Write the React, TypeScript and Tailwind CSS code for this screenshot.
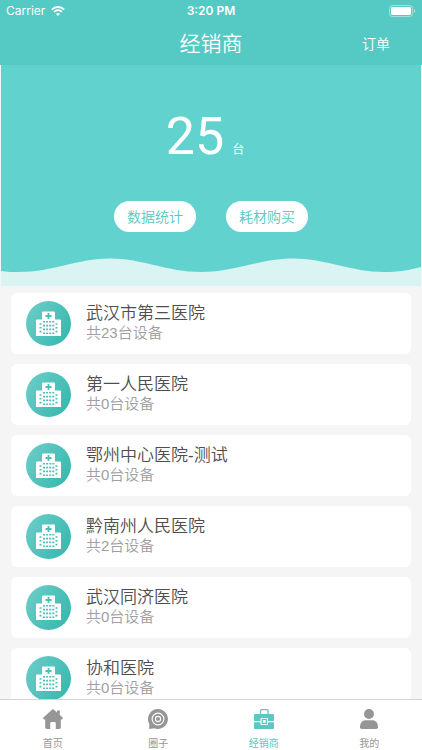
import type { ReactNode } from "react";

type Hospital = {
  id: number;
  name: string;
  devices: number;
};

const hospitals: Hospital[] = [
  { id: 1, name: "武汉市第三医院", devices: 23 },
  { id: 2, name: "第一人民医院", devices: 0 },
  { id: 3, name: "鄂州中心医院-测试", devices: 0 },
  { id: 4, name: "黔南州人民医院", devices: 2 },
  { id: 5, name: "武汉同济医院", devices: 0 },
  { id: 6, name: "协和医院", devices: 0 },
];

const WifiIcon = () => (
  <svg viewBox="0 0 14 10" className="w-[14px] h-[10px]" fill="none" stroke="white">
    <path d="M0.8 3.6C4.3 0.2 9.7 0.2 13.2 3.6" strokeWidth="1.9" />
    <path d="M3 5.9C5.3 3.7 8.7 3.7 11 5.9" strokeWidth="1.8" />
    <path d="M7 10L4.9 7.8C6.1 6.8 7.9 6.8 9.1 7.8Z" fill="white" stroke="none" />
  </svg>
);

const BatteryIcon = () => (
  <svg viewBox="0 0 27 12" className="w-[27px] h-[12px]">
    <rect x="0.5" y="0.5" width="23" height="11" rx="2.8" fill="none" stroke="white" strokeOpacity="0.45" />
    <rect x="2" y="2" width="20" height="8" rx="1.4" fill="white" />
    <path d="M25 4C26.6 4.6 26.6 7.4 25 8Z" fill="white" fillOpacity="0.5" />
  </svg>
);

const HospitalIcon = () => (
  <svg viewBox="0 0 45 45" className="w-[45px] h-[45px] shrink-0">
    <defs>
      <linearGradient id="disc" x1="0" y1="0.2" x2="1" y2="0.8">
        <stop offset="0" stopColor="#6accc7" />
        <stop offset="1" stopColor="#36b8ae" />
      </linearGradient>
    </defs>
    <circle cx="22.5" cy="22.5" r="22.5" fill="url(#disc)" />
    <path
      d="M17 10.5H28Q29 10.5 29 11.5V18.5H34Q35 18.5 35 19.5V35H10V19.5Q10 18.5 11 18.5H16V11.5Q16 10.5 17 10.5Z"
      fill="white"
    />
    <path d="M22.5 12V18M19.5 15H25.5" stroke="#4bc0b8" strokeWidth="1.8" />
    <g stroke="#4bc0b8" strokeWidth="1.6">
      <path d="M17 20.8H28.4M17 24.6H28.4M17 28.4H28.4M17 32.2H28.4" strokeDasharray="2 1.1" />
      <path d="M13.5 23H15.5M13.5 26.8H15.5M13.5 30.6H15.5M29.5 23H31.5M29.5 26.8H31.5M29.5 30.6H31.5" />
    </g>
  </svg>
);

const HomeIcon = () => (
  <svg viewBox="0 0 20 20" className="w-5 h-5" fill="currentColor">
    <path d="M9.3 0.5Q10 -0.1 10.7 0.5L14 3.4V1.5H16.8V5.9L19.6 8.5Q20.4 9.8 19 10.4H17.8V18.6Q17.8 20 16.4 20H12.8V14.4Q12.8 13 11.4 13H8.6Q7.2 13 7.2 14.4V20H3.6Q2.2 20 2.2 18.6V10.4H1Q-0.4 9.8 0.4 8.5Z" />
  </svg>
);

const CircleIcon = () => (
  <svg viewBox="0 0 20 20" className="w-5 h-5">
    <path
      d="M10 0A10 10 0 1 1 6 19.2Q3.5 20 0.8 19.8Q1.6 18.2 1.2 14.8A10 10 0 0 1 10 0Z"
      fill="currentColor"
    />
    <g fill="none" stroke="white" strokeWidth="1.1">
      <circle cx="10" cy="10" r="5.9" />
      <circle cx="10" cy="10" r="2.6" />
    </g>
  </svg>
);

const BriefcaseIcon = () => (
  <svg viewBox="0 0 20 20" className="w-5 h-5" fill="currentColor">
    <path d="M6.5 5V1.6Q6.5 0.7 7.4 0.7H13.1Q14 0.7 14 1.6V5" fill="none" stroke="currentColor" strokeWidth="1.3" />
    <path d="M1 5H19Q20 5 20 6V12H14V9H6.5V12H0V6Q0 5 1 5Z" />
    <path d="M0 13.2H6.5V16H14V13.2H20V19Q20 20 19 20H1Q0 20 0 19Z" />
    <rect x="8.2" y="10.4" width="4.1" height="4.1" fill="none" stroke="currentColor" strokeWidth="1.3" />
  </svg>
);

const UserIcon = () => (
  <svg viewBox="0 0 20 20" className="w-5 h-5" fill="currentColor">
    <circle cx="10" cy="5" r="5" />
    <path d="M6.2 11.2H13.8C17 11.2 19 14.5 19 18.2Q19 20 17.2 20H2.8Q1 20 1 18.2C1 14.5 3 11.2 6.2 11.2Z" />
  </svg>
);

const StatusBar = () => (
  <div className="grid grid-cols-3 items-center h-[22px] px-[6px] text-xs font-['Inter',sans-serif]">
    <div className="flex items-center gap-[6px]">
      <span className="font-normal">Carrier</span>
      <WifiIcon />
    </div>
    <span className="text-center font-semibold">3:20 PM</span>
    <div className="flex justify-end">
      <BatteryIcon />
    </div>
  </div>
);

const HospitalCard = ({ hospital }: { hospital: Hospital }) => (
  <li className="flex items-center gap-[15px] h-[61px] px-[15px] shrink-0 rounded-md bg-white">
    <HospitalIcon />
    <div className="pb-[2px]">
      <h2 className="text-[17px] leading-5 text-[#4e4e4e]">{hospital.name}</h2>
      <p className="text-[15px] leading-[18px] text-[#a0a0a0]">共{hospital.devices}台设备</p>
    </div>
  </li>
);

const tabs: { label: string; icon: ReactNode; active?: boolean }[] = [
  { label: "首页", icon: <HomeIcon /> },
  { label: "圈子", icon: <CircleIcon /> },
  { label: "经销商", icon: <BriefcaseIcon />, active: true },
  { label: "我的", icon: <UserIcon /> },
];

const TabBar = () => (
  <nav className="grid grid-cols-4 h-[51px] shrink-0 border-t border-[#d4d4d4] bg-white">
    {tabs.map((tab) => (
      <button
        key={tab.label}
        type="button"
        className={
          tab.active
            ? "flex flex-col items-center gap-[7px] pt-[9px] font-normal text-[#5ac8c3]"
            : "flex flex-col items-center gap-[7px] pt-[9px] font-normal text-[#969696]"
        }
      >
        {tab.icon}
        <span className="text-[10px] leading-4">{tab.label}</span>
      </button>
    ))}
  </nav>
);

const App = () => {
  const total = hospitals.reduce((sum, h) => sum + h.devices, 0);

  return (
    <div className="flex flex-col h-screen overflow-hidden bg-[#f5f5f5] font-[350] font-['Liberation_Sans','Noto_Sans_CJK_SC',sans-serif]">
      <header className="shrink-0 bg-[#55c9c3] text-white">
        <StatusBar />
        <div className="grid grid-cols-3 items-center h-[43px]">
          <h1 className="col-start-2 text-center text-[21px] leading-8 font-[350]">经销商</h1>
          <button type="button" className="justify-self-end mr-8 text-sm">
            订单
          </button>
        </div>
      </header>

      <section className="shrink-0 mx-px bg-[#62d2ce] text-white">
        <div className="flex items-baseline justify-center gap-2 h-[136px] pt-[34px] pr-3">
          <span className="text-[52px] leading-[76px] font-normal font-['Roboto',sans-serif]">{total}</span>
          <span className="text-xs">台</span>
        </div>
        <div className="flex justify-center gap-[30px]">
          <button type="button" className="h-[31px] px-[13px] rounded-full bg-white text-sm text-[#55c9c3]">
            数据统计
          </button>
          <button type="button" className="h-[31px] px-[13px] rounded-full bg-white text-sm text-[#55c9c3]">
            耗材购买
          </button>
        </div>
        <svg viewBox="0 0 420 54" preserveAspectRatio="none" className="block w-full h-[54px]">
          <path
            d="M0 39C6 40 12 40 18 40C52 40 76 26.5 109 26.5C142 26.5 166 40 200 40C234 40 259 26.5 292 26.5C325 26.5 350 40 383 40C397 40 409 38 420 35V54H0Z"
            fill="#d9f4f3"
          />
        </svg>
      </section>

      <main className="flex-1 min-h-0 overflow-hidden px-[11px] pt-[7px]">
        <ul className="flex flex-col gap-[10px]">
          {hospitals.map((hospital) => (
            <HospitalCard key={hospital.id} hospital={hospital} />
          ))}
        </ul>
      </main>

      <TabBar />
    </div>
  );
};

export default App;
